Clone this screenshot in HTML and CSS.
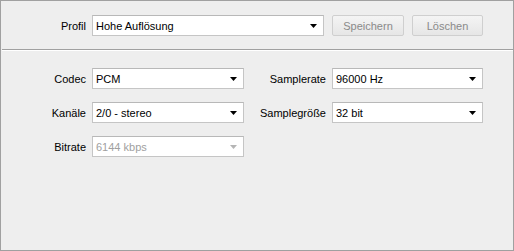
FILE: index.html
```html
<!DOCTYPE html>
<html lang="de">

<head>
    <meta charset="UTF-8">
    <title>Audio-Einstellungen</title>
    <link rel="stylesheet" href="styles.css">
</head>

<body>

    <div class="frame">
        <div class="profile-bar">
            <span class="label">Profil</span>
            <div class="combo combo-wide">
                <span>Hohe Auflösung</span>
                <svg class="arrow" width="7" height="4" viewBox="0 0 7 4"><path d="M0 0H7L3.5 4Z" /></svg>
            </div>
            <button class="btn" disabled>Speichern</button>
            <button class="btn btn-small" disabled>Löschen</button>
        </div>

        <div class="panel">
            <div class="settings">
                <span class="label">Codec</span>
                <div class="combo">
                    <span>PCM</span>
                    <svg class="arrow" width="7" height="4" viewBox="0 0 7 4"><path d="M0 0H7L3.5 4Z" /></svg>
                </div>
                <span class="label">Samplerate</span>
                <div class="combo">
                    <span>96000 Hz</span>
                    <svg class="arrow" width="7" height="4" viewBox="0 0 7 4"><path d="M0 0H7L3.5 4Z" /></svg>
                </div>

                <span class="label">Kanäle</span>
                <div class="combo">
                    <span>2/0 - stereo</span>
                    <svg class="arrow" width="7" height="4" viewBox="0 0 7 4"><path d="M0 0H7L3.5 4Z" /></svg>
                </div>
                <span class="label">Samplegröße</span>
                <div class="combo">
                    <span>32 bit</span>
                    <svg class="arrow" width="7" height="4" viewBox="0 0 7 4"><path d="M0 0H7L3.5 4Z" /></svg>
                </div>

                <span class="label">Bitrate</span>
                <div class="combo disabled">
                    <span>6144 kbps</span>
                    <svg class="arrow" width="7" height="4" viewBox="0 0 7 4"><path d="M0 0H7L3.5 4Z" /></svg>
                </div>
            </div>
        </div>
    </div>

</body>

</html>
```

FILE: styles.css
```css
body {
    margin: 0;
    font-family: "Liberation Sans", Arial, sans-serif;
    font-size: 11px;
    color: #000;
    background-color: #eeeeee;
}

.frame {
    width: 514px;
    height: 251px;
    box-sizing: border-box;
    border: 1px solid #a0a0a0;
    display: flex;
    flex-direction: column;
    background-color: #eeeeee;
}

.profile-bar {
    display: flex;
    align-items: center;
    height: 48px;
    padding-left: 25px;
    padding-top: 1px;
    box-sizing: border-box;
}

.label {
    text-align: right;
    white-space: nowrap;
}

.profile-bar .label {
    width: 60px;
    margin-right: 6px;
}

.combo {
    display: flex;
    align-items: center;
    justify-content: space-between;
    height: 21px;
    box-sizing: border-box;
    border: 1px solid #c5c5c5;
    border-top-color: #b8b8b8;
    background-color: #fff;
    padding: 0 6px 0 3px;
}

.combo-wide {
    width: 232px;
}

.arrow {
    fill: #000;
}

.combo.disabled {
    color: #a0a0a0;
}

.combo.disabled .arrow {
    fill: #b5b5b5;
}

.btn {
    font-family: inherit;
    font-size: 11px;
    color: #8a8a8a;
    height: 21px;
    width: 72px;
    margin-left: 8px;
    padding: 0;
    border: 1px solid #cfcfcf;
    border-radius: 2px;
    background: linear-gradient(#f4f4f4, #e6e6e6);
}

.btn-small {
    width: 71px;
}

.panel {
    flex: 1;
    border-top: 1px solid #a0a0a0;
    box-shadow: inset 0 1px 0 #fff;
    margin: 0 0 0 1px;
}

.settings {
    display: grid;
    grid-template-columns: 60px 152px 76px 151px;
    grid-auto-rows: 21px;
    column-gap: 6px;
    row-gap: 13px;
    align-items: center;
    padding: 18px 0 0 24px;
}
```
